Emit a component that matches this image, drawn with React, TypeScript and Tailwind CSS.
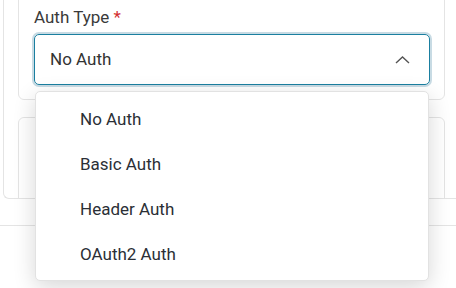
import React from 'react';

const options = ['No Auth', 'Basic Auth', 'Header Auth', 'OAuth2 Auth'];

const App: React.FC = () => {
    return (
        <div className="relative w-[456px] h-[288px] overflow-hidden bg-white font-['Roboto',sans-serif]">
            {/* outer panel */}
            <div className="ml-[3px] mt-[-20px] w-[520px] h-[219px] overflow-hidden border-l border-b border-[#e4e4e4] rounded-bl-[6px] pl-[14px] pt-[10px]">
                <div className="w-[427px] border border-[#e4e4e4] rounded-[6px] pt-[14px] pl-[15px] pb-[14px]">
                    <div className="h-[24px] text-[17px] leading-[24px] text-[#3a3a3a]">
                        Auth Type <span className="text-[#d32f2f]">*</span>
                    </div>
                    <div className="mt-[5px] w-[396px] h-[51px] flex items-center justify-between rounded-[5px] border border-[#1a7fa0] ring-2 ring-[#c8dbe4] pl-[15px] pr-[19px]">
                        <span className="text-[17px] text-[#333]">No Auth</span>
                        <svg width="15" height="8" viewBox="0 0 15 8" fill="none">
                            <polyline points="1,7 7.5,1 14,7" stroke="#555" strokeWidth="1.4" />
                        </svg>
                    </div>
                </div>
                <div className="mt-[17px] w-[427px] h-[120px] border border-[#e4e4e4] rounded-[6px]" />
            </div>
            <div className="mt-[26px] border-t border-[#e4e4e4]" />

            {/* dropdown menu */}
            <div className="absolute left-[35px] top-[91px] w-[394px] h-[190px] bg-white border border-[#e2e2e2] rounded-[5px] py-[5px] shadow-[0_6px_22px_rgba(0,0,0,0.16)]">
                {options.map(o => (
                    <div key={o} className="h-[45px] flex items-center pl-[44px] text-[17px] text-[#2b2f36]">
                        {o}
                    </div>
                ))}
            </div>
        </div>
    );
};

export default App;
